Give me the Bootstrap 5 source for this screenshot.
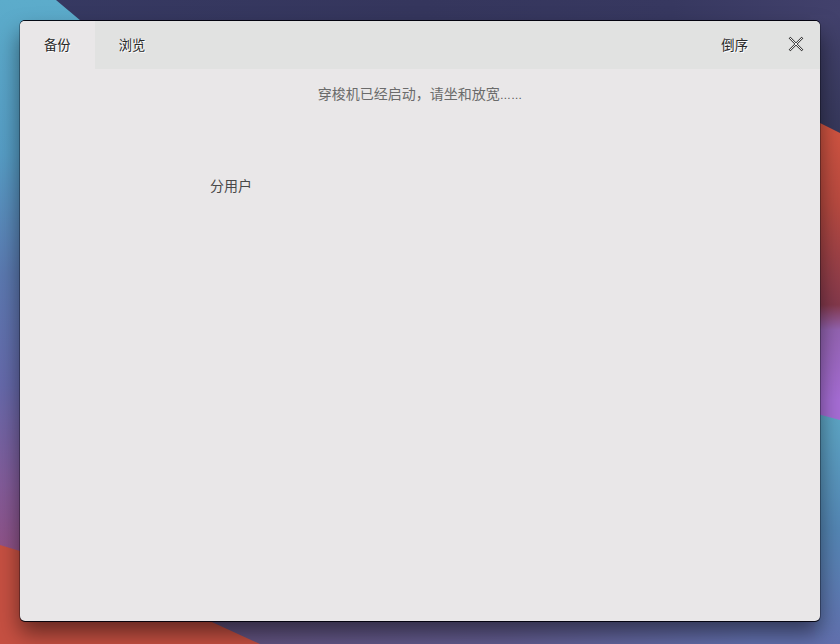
<!DOCTYPE html>
<html lang="zh-CN">
<head>
<meta charset="utf-8">
<meta name="viewport" content="width=device-width, initial-scale=1">
<title>备份</title>
<link href="https://cdn.jsdelivr.net/npm/bootstrap@5.3.0/dist/css/bootstrap.min.css" rel="stylesheet">
<style>
body { font-family: "Liberation Sans", "Noto Sans CJK SC", sans-serif; background: #35365c; width: 840px; height: 644px; padding: 21px 20px 23px; }
.wallpaper { top: 0; left: 0; z-index: -1; }
.app-window { background: #e9e7e8; border-radius: 5px; box-shadow: 0 0 0 1px rgba(0,0,10,.3), 0 1px 0 rgba(0,0,10,.85), 0 -1px 0 rgba(0,0,10,.9), 0 12px 22px rgba(0,0,0,.5); }
.title-bar { height: 48px; background: #e1e2e1; }
.tool-tab { font-size: 13.33px; line-height: 20px; color: #2a2a2a; border: 0; border-radius: 0; background: transparent; padding: 2px 24px 0; height: 48px; text-shadow: 1px 1px 0 #fff; }
.tool-tab.active { background: #e9e7e8; }
.close-btn { width: 48px; height: 48px; border: 0; background: transparent; padding: 0 0 2px; }
.status-line { font-size: 14px; line-height: 20px; color: #6b6b6b; padding-top: 15px; }
.ellipsis { font-size: 11.2px; color: #505050; }
.group-label { font-size: 14px; line-height: 20px; color: #484848; margin: 71px 0 0 190px; }
</style>
<script src="https://cdn.jsdelivr.net/npm/bootstrap@5.3.0/dist/js/bootstrap.bundle.min.js"></script>
</head>
<body class="m-0 overflow-hidden position-relative">
<svg class="wallpaper position-absolute" width="840" height="644" viewBox="0 0 840 644" aria-hidden="true">
  <defs>
    <linearGradient id="top" x2="1" y2="0"><stop offset="0" stop-color="#363962"/><stop offset=".5" stop-color="#35365d"/><stop offset=".8" stop-color="#373860"/><stop offset="1" stop-color="#42416c"/></linearGradient>
    <linearGradient id="edge" x2="0" y2="1"><stop offset="0" stop-color="#42416c"/><stop offset="1" stop-color="#353759"/></linearGradient>
    <linearGradient id="left" gradientUnits="userSpaceOnUse" x1="0" y1="0" x2="0" y2="550"><stop offset="0" stop-color="#5caccb"/><stop offset=".28" stop-color="#569dc5"/><stop offset=".5" stop-color="#5b79b0"/><stop offset=".7" stop-color="#6569aa"/><stop offset=".88" stop-color="#825b99"/><stop offset="1" stop-color="#8f5287"/></linearGradient>
    <linearGradient id="red" gradientUnits="userSpaceOnUse" x1="0" y1="120" x2="0" y2="400"><stop offset="0" stop-color="#d35541"/><stop offset=".3" stop-color="#b84a40"/><stop offset=".66" stop-color="#84394c"/><stop offset=".75" stop-color="#9363b1"/><stop offset="1" stop-color="#a66dd5"/></linearGradient>
    <linearGradient id="blue" gradientUnits="userSpaceOnUse" x1="0" y1="415" x2="0" y2="644"><stop offset="0" stop-color="#5da6c5"/><stop offset=".5" stop-color="#5486b4"/><stop offset="1" stop-color="#6270ae"/></linearGradient>
    <linearGradient id="bottom"><stop offset="0" stop-color="#62517d"/><stop offset=".5" stop-color="#625c90"/><stop offset=".9" stop-color="#6270ae"/><stop offset="1" stop-color="#6270ae"/></linearGradient>
  </defs>
  <path fill="url(#top)" d="M0 0h840v40H0z"/>
  <path fill="url(#edge)" d="M810 15h30v130h-30z"/>
  <path fill="url(#left)" d="M0 0h56l50 42v518H0z"/>
  <path fill="url(#red)" d="M810 118l30 15v300h-30z"/>
  <path fill="url(#blue)" d="M810 412l30 8v224h-30z"/>
  <path fill="url(#bottom)" d="M190 600h625v44H190z"/>
  <path fill="#c65042" d="M0 545l40 12v40l150 15 70 32H0z"/>
</svg>
<main class="app-window h-100 d-flex flex-column overflow-hidden">
  <header class="title-bar d-flex align-items-center flex-shrink-0">
    <button type="button" class="tool-tab active">备份</button>
    <button type="button" class="tool-tab">浏览</button>
    <button type="button" class="tool-tab ms-auto">倒序</button>
    <button type="button" class="close-btn d-flex align-items-center justify-content-center" aria-label="关闭">
      <svg width="16" height="16" viewBox="0 0 16 16" fill="none"><path d="M1.5 1.5l13 13m0-13l-13 13" stroke="#3a3a3a" stroke-width="2.4"/><path d="M1.8 1.8l12.4 12.4m0-12.4L1.8 14.2" stroke="#f4f4f4" stroke-width="1"/></svg>
    </button>
  </header>
  <p class="status-line text-center mb-0">穿梭机已经启动&#xFF0C;请坐和放宽<span class="ellipsis">……</span></p>
  <div class="group-label">分用户</div>
</main>
</body>
</html>
